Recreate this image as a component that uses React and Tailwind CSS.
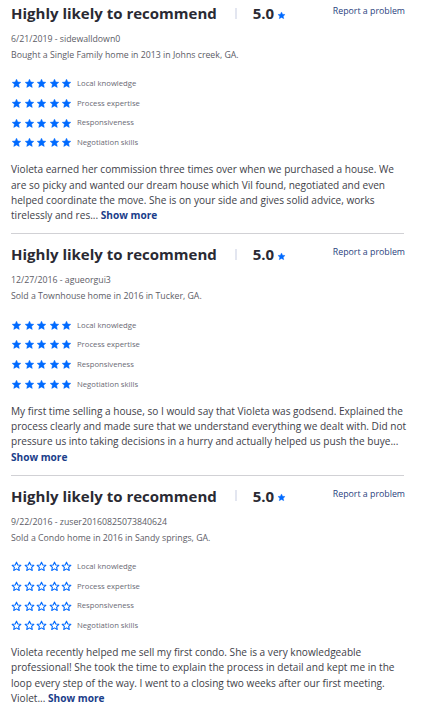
import React from "react";

const reviews = [
  {
    date: "6/21/2019 - sidewalldown0",
    desc: "Bought a Single Family home in 2013 in Johns creek, GA.",
    filled: true,
    text: "Violeta earned her commission three times over when we purchased a house. We are so picky and wanted our dream house which Vil found, negotiated and even helped coordinate the move. She is on your side and gives solid advice, works tirelessly and res...",
    sep: true,
  },
  {
    date: "12/27/2016 - agueorgui3",
    desc: "Sold a Townhouse home in 2016 in Tucker, GA.",
    filled: true,
    text: "My first time selling a house, so I would say that Violeta was godsend. Explained the process clearly and made sure that we understand everything we dealt with. Did not pressure us into taking decisions in a hurry and actually helped us push the buye...",
    sep: true,
  },
  {
    date: "9/22/2016 - zuser20160825073840624",
    desc: "Sold a Condo home in 2016 in Sandy springs, GA.",
    filled: false,
    text: "Violeta recently helped me sell my first condo. She is a very knowledgeable professional! She took the time to explain the process in detail and kept me in the loop every step of the way. I went to a closing two weeks after our first meeting. Violet...",
    sep: false,
  },
];

const STAR = "M12 2.5l2.9 6.2 6.6.7-4.9 4.5 1.4 6.6L12 17.2l-6 3.3 1.4-6.6L2.5 9.4l6.6-.7z";

function Star({ filled, size = 11 }) {
  return (
    <svg width={size} height={size} viewBox="0 0 24 24" className="shrink-0">
      <path
        d={STAR}
        fill={filled ? "#006aff" : "none"}
        stroke="#006aff"
        strokeWidth={filled ? 1 : 2.4}
        strokeLinejoin="round"
      />
    </svg>
  );
}

const labels = ["Local knowledge", "Process expertise", "Responsiveness", "Negotiation skills"];

function Review({ r }) {
  return (
    <div>
      <div className="flex items-start justify-between mr-[2px]">
        <div className="flex items-center">
          <span className="text-[15px] font-bold text-[#2a2a33] leading-[26px]">Highly likely to recommend</span>
          <span className="ml-[18px] w-[2px] h-[11px] bg-[#e3e6f0]" />
          <span className="ml-[16px] text-[15px] font-bold text-[#2a2a33] leading-[26px]">5.0</span>
          <span className="ml-[3px] mt-[4px]"><Star filled size={9} /></span>
        </div>
        <span className="text-[8.8px] text-[#2a3f7e] leading-[14px] mt-[4px]">Report a problem</span>
      </div>
      <div className="mt-[5px] text-[8.75px] text-[#5c5c66] leading-[16px]">{r.date}</div>
      <div className="text-[8.75px] text-[#5c5c66] leading-[16px]">{r.desc}</div>
      <div className="mt-[11px] flex flex-col">
        {labels.map((l) => (
          <div key={l} className="flex items-center h-[19.7px]">
            <div className="flex gap-[1.5px]">
              {[0, 1, 2, 3, 4].map((i) => (
                <Star key={i} filled={r.filled} size={11} />
              ))}
            </div>
            <span className="ml-[5px] text-[7.7px] text-[#6a6a75]">{l}</span>
          </div>
        ))}
      </div>
      <p className="mt-[9.5px] text-[10.1px] leading-[15.3px] text-[#3e3e48]">
        {r.text}{" "}
        <span className="font-bold text-[#1a3d8a]">Show more</span>
      </p>
      {r.sep && <div className="mt-[10px] mb-[7px] mr-[3px] h-px bg-[#d1d1d5]" />}
    </div>
  );
}

export default function App() {
  return (
    <div className="w-[427px] h-[712px] overflow-hidden bg-white pl-[11px] pr-[20px]" style={{ fontFamily: '"Open Sans", sans-serif' }}>
      {reviews.map((r, i) => (
        <Review key={i} r={r} />
      ))}
    </div>
  );
}
